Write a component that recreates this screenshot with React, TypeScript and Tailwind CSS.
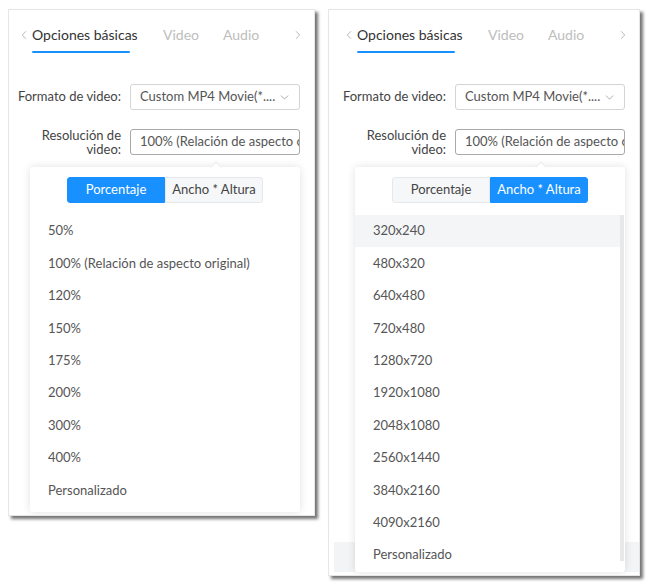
import { ChevronLeft, ChevronRight, ChevronDown } from "lucide-react";

const PERCENTS = [
  "50%",
  "100% (Relación de aspecto original)",
  "120%",
  "150%",
  "175%",
  "200%",
  "300%",
  "400%",
  "Personalizado",
];

const SIZES = [
  "320x240",
  "480x320",
  "640x480",
  "720x480",
  "1280x720",
  "1920x1080",
  "2048x1080",
  "2560x1440",
  "3840x2160",
  "4090x2160",
  "Personalizado",
];

function Tabs() {
  return (
    <div className="flex items-start mt-[15px] pl-[8px]">
      <div className="w-[15px] h-[20px] flex items-center text-[#a8a8a8]">
        <ChevronLeft size={14} strokeWidth={1.4} />
      </div>
      <div className="w-[131px] flex flex-col">
        <span className="text-[14px] leading-[20px] text-[#333]">Opciones básicas</span>
        <div className="mt-[6px] h-[2px] w-[98px] bg-[#1890ff] rounded-full" />
      </div>
      <span className="w-[60px] text-[14px] leading-[20px] text-[#bdbdbd]">Video</span>
      <span className="w-[68px] text-[14px] leading-[20px] text-[#bdbdbd]">Audio</span>
      <div className="h-[20px] flex items-center text-[#a8a8a8]">
        <ChevronRight size={14} strokeWidth={1.4} />
      </div>
    </div>
  );
}

function Form() {
  return (
    <div className="mt-[31px] text-[13px] text-[#444]">
      <div className="flex items-center gap-[9px]">
        <span className="w-[112px] text-right whitespace-nowrap">Formato de video:</span>
        <div className="w-[170px] h-[26px] border border-[#d4d4d4] rounded-[3px] flex items-center justify-between pl-[9px] pr-[8px] text-[#555]">
          <span className="whitespace-nowrap">Custom MP4 Movie(*....</span>
          <ChevronDown size={13} strokeWidth={1.5} className="text-[#999]" />
        </div>
      </div>
      <div className="flex items-center gap-[9px] mt-[18px]">
        <div className="w-[112px] text-right leading-[14px] flex flex-col">
          <span>Resolución de</span>
          <span>video:</span>
        </div>
        <div className="w-[170px] h-[26px] border border-[#a9a9a9] rounded-[3px] flex items-center pl-[9px] overflow-hidden text-[#555]">
          <span className="whitespace-nowrap">100% (Relación de aspecto original)</span>
        </div>
      </div>
    </div>
  );
}

function Segmented({ active }: { active: 0 | 1 }) {
  const on = "bg-[#1890ff] text-white border-[#1890ff]";
  const off = "bg-[#f6f7f9] text-[#444] border-[#e6e8eb]";
  return (
    <div className="flex ml-[37px] mt-[10px] text-[13px]">
      <div className={`w-[98px] h-[26px] flex items-center justify-center border rounded-l-[3px] ${active === 0 ? on : off}`}>
        Porcentaje
      </div>
      <div className={`w-[98px] h-[26px] flex items-center justify-center border rounded-r-[3px] ${active === 1 ? on : off}`}>
        Ancho * Altura
      </div>
    </div>
  );
}

function Panel({
  width,
  height,
  offset,
  active,
  items,
  scroll,
}: {
  width: number;
  height: number;
  offset: number;
  active: 0 | 1;
  items: string[];
  scroll: boolean;
}) {
  return (
    <div
      className="relative bg-white border border-[#e6e6e6] shadow-[3px_3px_3px_rgba(0,0,0,0.55)] overflow-hidden flex flex-col"
      style={{ width, height, paddingLeft: offset }}
    >
      <Tabs />
      <Form />
      {scroll && <div className="mt-auto mb-[3px] h-[30px] bg-[#f3f4f6]" />}

      {/* dropdown */}
      <div
        className="absolute top-[157px] bottom-[3px] w-[270px] bg-white shadow-[0_0_8px_rgba(0,0,0,0.12)] rounded-[3px] flex flex-col z-10"
        style={{ left: 21 + offset }}
      >
        <div className="absolute -top-[4px] left-[182px] w-[8px] h-[8px] bg-white rotate-45 border-l border-t border-[#ececec]" />
        <Segmented active={active} />
        <div className="mt-[12px] flex flex-1 min-h-0">
          <div className="flex-1">
            {items.map((t, i) => (
              <div
                key={t}
                className={`h-[32.4px] flex items-center pl-[18px] text-[13px] text-[#555] ${scroll && i === 0 ? "bg-[#f4f5f7]" : ""}`}
              >
                {t}
              </div>
            ))}
          </div>
          {scroll && <div className="w-[4px] mr-[1px] h-[346px] bg-[#e8e8e8]" />}
        </div>
      </div>
    </div>
  );
}

export default function App() {
  return (
    <div
      className="w-[650px] h-[585px] bg-white flex items-start pt-[9px] pl-[8px] gap-[13px]"
      style={{ fontFamily: "Lato, 'Open Sans', sans-serif" }}
    >
      <Panel width={307} height={507} offset={0} active={0} items={PERCENTS} scroll={false} />
      <Panel width={312} height={567} offset={5} active={1} items={SIZES} scroll={true} />
    </div>
  );
}
